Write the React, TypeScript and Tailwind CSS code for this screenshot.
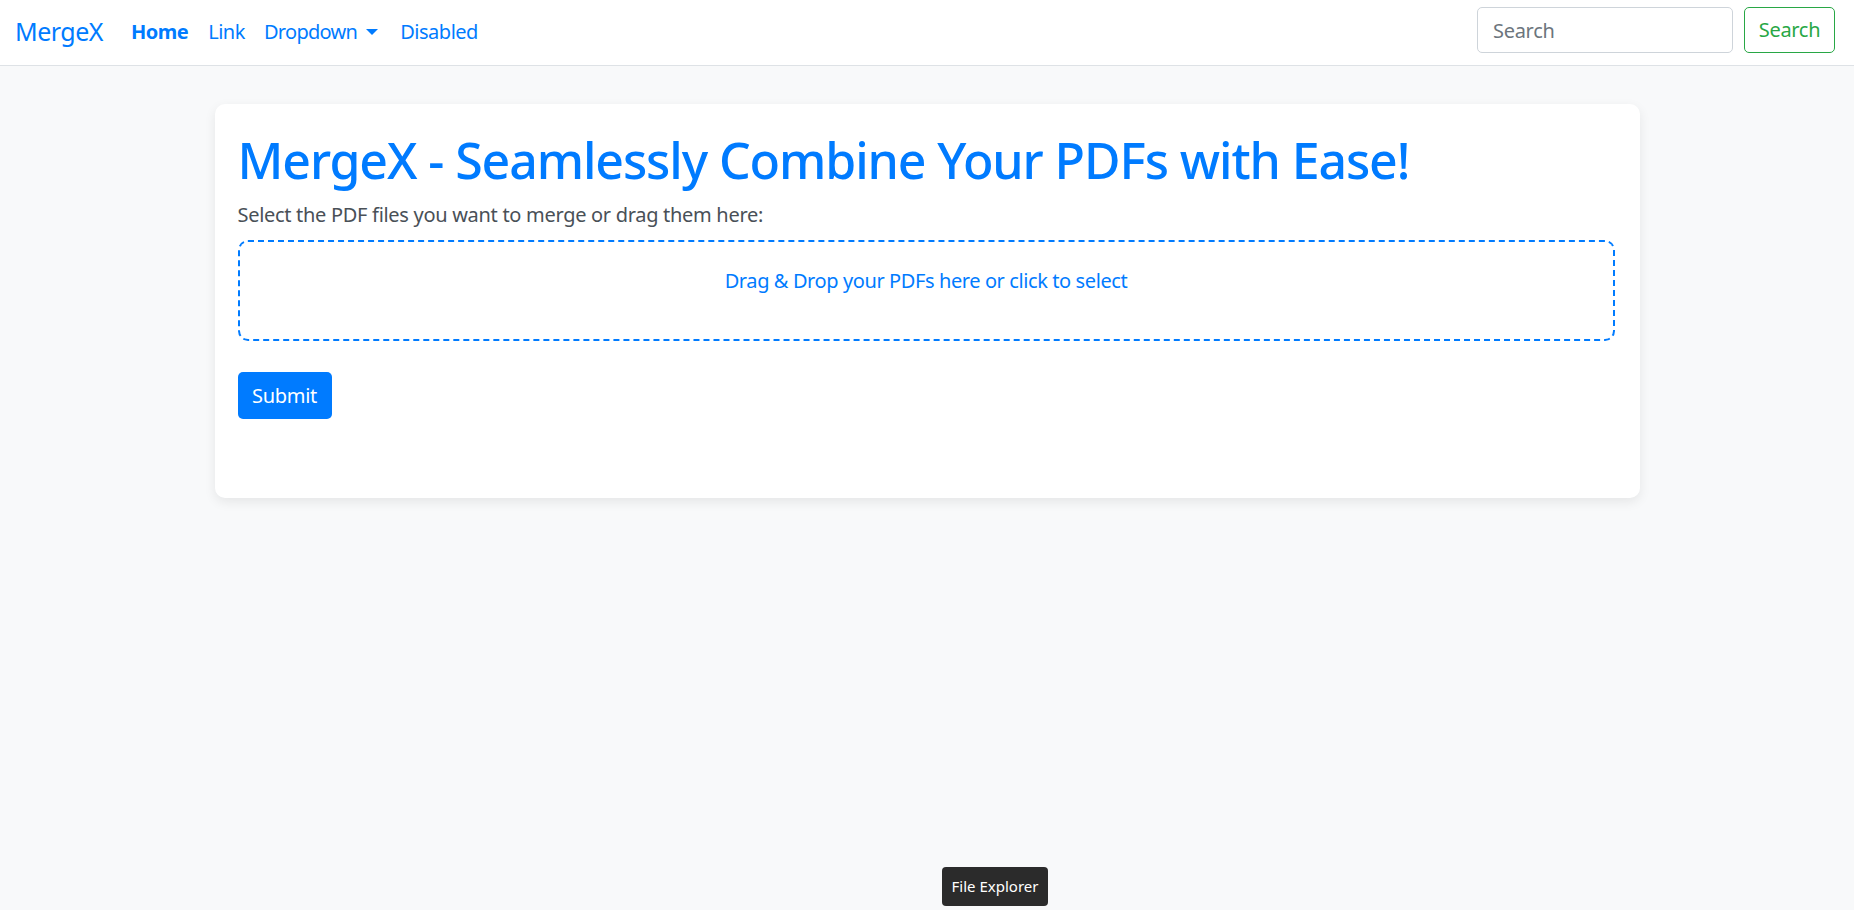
import React from "react";

const NavBar = () => {
  return (
    <nav className="flex justify-between h-[66px] bg-white border-b border-[#dee2e6] pl-[15px] pr-[19px]">
      <div className="flex items-center pb-[2px] tracking-[-0.5px]">
        <a className="text-[25px] text-[#007bff] leading-none mr-[28px]">MergeX</a>
        <ul className="flex items-center text-[20px] text-[#007bff]">
          <li className="font-bold mr-[20px]">Home</li>
          <li className="mr-[19px]">Link</li>
          <li className="flex items-center mr-[22px] tracking-[-0.7px]">
            Dropdown
            <span className="ml-[9px] w-0 h-0 border-l-[6px] border-r-[6px] border-t-[6px] border-l-transparent border-r-transparent border-t-[#007bff]" />
          </li>
          <li>Disabled</li>
        </ul>
      </div>
      <form className="flex items-start gap-[11px] pt-[7px]">
        <input
          type="text"
          placeholder="Search"
          className="w-[256px] h-[46px] px-[15px] text-[20px] tracking-[-0.3px] border border-[#ced4da] rounded-[5px] placeholder:text-[#6c757d] outline-none"
        />
        <button
          type="button"
          className="h-[46px] w-[91px] text-[20px] tracking-[-0.3px] text-[#28a745] border border-[#28a745] rounded-[5px] bg-white"
        >
          Search
        </button>
      </form>
    </nav>
  );
};

const MergeCard = () => {
  return (
    <div className="w-[1425px] mx-auto mt-[38px] bg-white rounded-[10px] shadow-[0_4px_12px_rgba(0,0,0,0.08)] pl-[23px] pr-[25px] pt-[26px] pb-[79px]">
      <h1 className="text-[50px] font-medium leading-[1.2] tracking-[-1.1px] text-[#007bff] mb-[10px]">
        MergeX - Seamlessly Combine Your PDFs with Ease!
      </h1>
      <p className="text-[20px] leading-[30px] tracking-[-0.3px] text-[#495057] mb-[10px]">
        Select the PDF files you want to merge or drag them here:
      </p>
      {/* drop zone */}
      <div className="border-2 border-dashed border-[#007bff] rounded-[10px] pt-[24px] pb-[43px] text-center text-[20px] leading-[30px] tracking-[-0.4px] text-[#007bff]">
        Drag &amp; Drop your PDFs here or click to select
      </div>
      <button className="mt-[31px] h-[47px] w-[94px] bg-[#007bff] text-white text-[20px] tracking-[-0.3px] rounded-[5px]">
        Submit
      </button>
    </div>
  );
};

export default function App() {
  return (
    <div className="relative h-[910px] bg-[#f8f9fa] overflow-hidden font-['Noto_Sans',sans-serif]">
      <NavBar />
      <MergeCard />
      <div className="absolute left-[942px] top-[867px] w-[106px] h-[39px] flex items-center justify-center bg-[#2b2b2b] rounded-[4px] text-white text-[15px]">
        File Explorer
      </div>
    </div>
  );
}
